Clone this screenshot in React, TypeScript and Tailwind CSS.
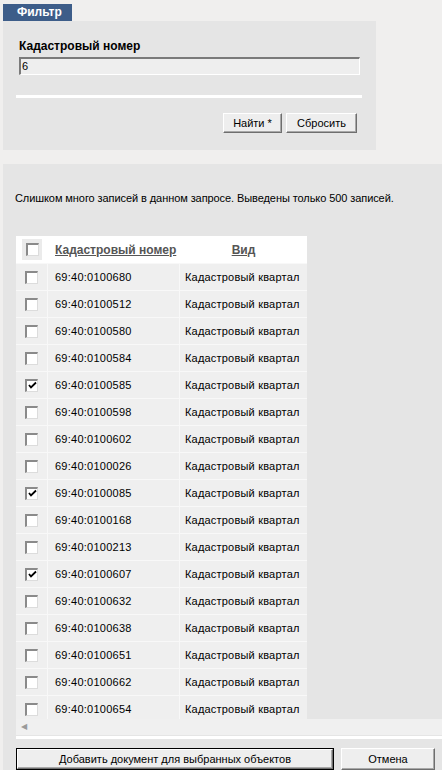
import React from "react";

const rows: [string, boolean][] = [
  ["69:40:0100680", false],
  ["69:40:0100512", false],
  ["69:40:0100580", false],
  ["69:40:0100584", false],
  ["69:40:0100585", true],
  ["69:40:0100598", false],
  ["69:40:0100602", false],
  ["69:40:0100026", false],
  ["69:40:0100085", true],
  ["69:40:0100168", false],
  ["69:40:0100213", false],
  ["69:40:0100607", true],
  ["69:40:0100632", false],
  ["69:40:0100638", false],
  ["69:40:0100651", false],
  ["69:40:0100662", false],
  ["69:40:0100654", false],
];

function Checkbox({ checked }: { checked?: boolean }) {
  return (
    <div className="w-[13px] h-[13px] bg-white border-t-2 border-l-2 border-t-[#8a8a8a] border-l-[#8a8a8a] border-r border-b border-r-[#dcdcdc] border-b-[#dcdcdc] flex items-center justify-center">
      {checked && (
        <svg width="9" height="9" viewBox="0 0 9 9">
          <path d="M1 4 L3 6.5 L8 1.5" stroke="#000" strokeWidth="1.8" fill="none" />
        </svg>
      )}
    </div>
  );
}

function Btn({ children, w, def }: { children: React.ReactNode; w: string; def?: boolean }) {
  return (
    <div className={`${w} ${def ? "border border-black" : ""}`}>
      <div className="h-full flex items-center justify-center bg-[#eeeeee] border-t border-l border-white border-r border-b border-r-[#6e6e6e] border-b-[#6e6e6e] shadow-[inset_-1px_-1px_0_#a8a8a8] text-[11px] leading-none font-normal">
        {children}
      </div>
    </div>
  );
}

export default function App() {
  return (
    <div className="w-[442px] h-[770px] overflow-hidden bg-[#f0efee] text-black text-[11px] font-['Liberation_Sans',Arial,sans-serif]">
      <div className="ml-[3px] mt-[4px] w-[69px] h-[17px] bg-[#3d5d89] text-white font-bold text-[12px] leading-[17px] pl-[14px]">
        Фильтр
      </div>
      <div className="ml-[3px] w-[373px] h-[129px] bg-[#e5e5e5] pt-[18px] pl-[13px]">
        <div className="ml-[3px] font-bold text-[12px] leading-[14px]">Кадастровый номер</div>
        <div className="ml-[3px] mt-[4px] w-[341px] h-[18px] bg-[#eeeeee] border-t-2 border-l-2 border-t-[#7a7a7a] border-l-[#7a7a7a] border-r border-b border-r-white border-b-white pl-[1px] leading-[14px]">
          6
        </div>
        <div className="mt-[20px] w-[346px] h-[3px] bg-white" />
        <div className="mt-[15px] w-[346px] pr-[5px] flex justify-end gap-[4px] h-[20px]">
          <Btn w="w-[59px]">Найти *</Btn>
          <Btn w="w-[71px]">Сбросить</Btn>
        </div>
      </div>
      <div className="mt-[14px] ml-[3px] w-[439px] h-[606px] bg-[#e5e5e5]">
        <div className="pt-[28px] pl-[12px] leading-[13px] tracking-[-0.08px]">
          Слишком много записей в данном запросе. Выведены только 500 записей.
        </div>
        <div className="mt-[31px] ml-[13px] w-[426px]">
          <div className="h-[483px] overflow-hidden">
            <div className="w-[291px]">
              <div className="flex h-[27px] bg-white items-center">
                <div className="w-[32px] flex justify-center">
                  <div className="w-[20px] h-[21px] bg-[#ebebeb] flex items-center justify-center">
                    <Checkbox />
                  </div>
                </div>
                <div className="w-[132px] pl-[7px] font-bold text-[12px] text-[#555555] underline">
                  Кадастровый номер
                </div>
                <div className="w-[127px] text-center font-bold text-[12px] text-[#555555] underline">
                  Вид
                </div>
              </div>
              {rows.map(([num, c]) => (
                <div key={num} className="flex h-[27px] bg-[#efefef] border-t border-[#f8f8f8] items-center">
                  <div className="w-[32px] h-full flex items-center justify-center border-r border-[#f8f8f8]">
                    <Checkbox checked={c} />
                  </div>
                  <div className="w-[132px] h-full flex items-center pl-[7px] border-r border-[#f8f8f8] tracking-[0.25px]">
                    {num}
                  </div>
                  <div className="w-[127px] pl-[5px] tracking-[0.2px] whitespace-nowrap">Кадастровый квартал</div>
                </div>
              ))}
            </div>
          </div>
          <div className="h-[16px] bg-[#f0f0f0] flex items-center pl-[5px] text-[#9a9a9a] text-[8px]">◀</div>
          <div className="mt-[1px] h-[3px] bg-white" />
          <div className="mt-[9px] flex gap-[7px] h-[22px]">
            <Btn w="w-[318px]" def>
              Добавить документ для выбранных объектов
            </Btn>
            <Btn w="w-[94px]">Отмена</Btn>
          </div>
        </div>
      </div>
    </div>
  );
}
